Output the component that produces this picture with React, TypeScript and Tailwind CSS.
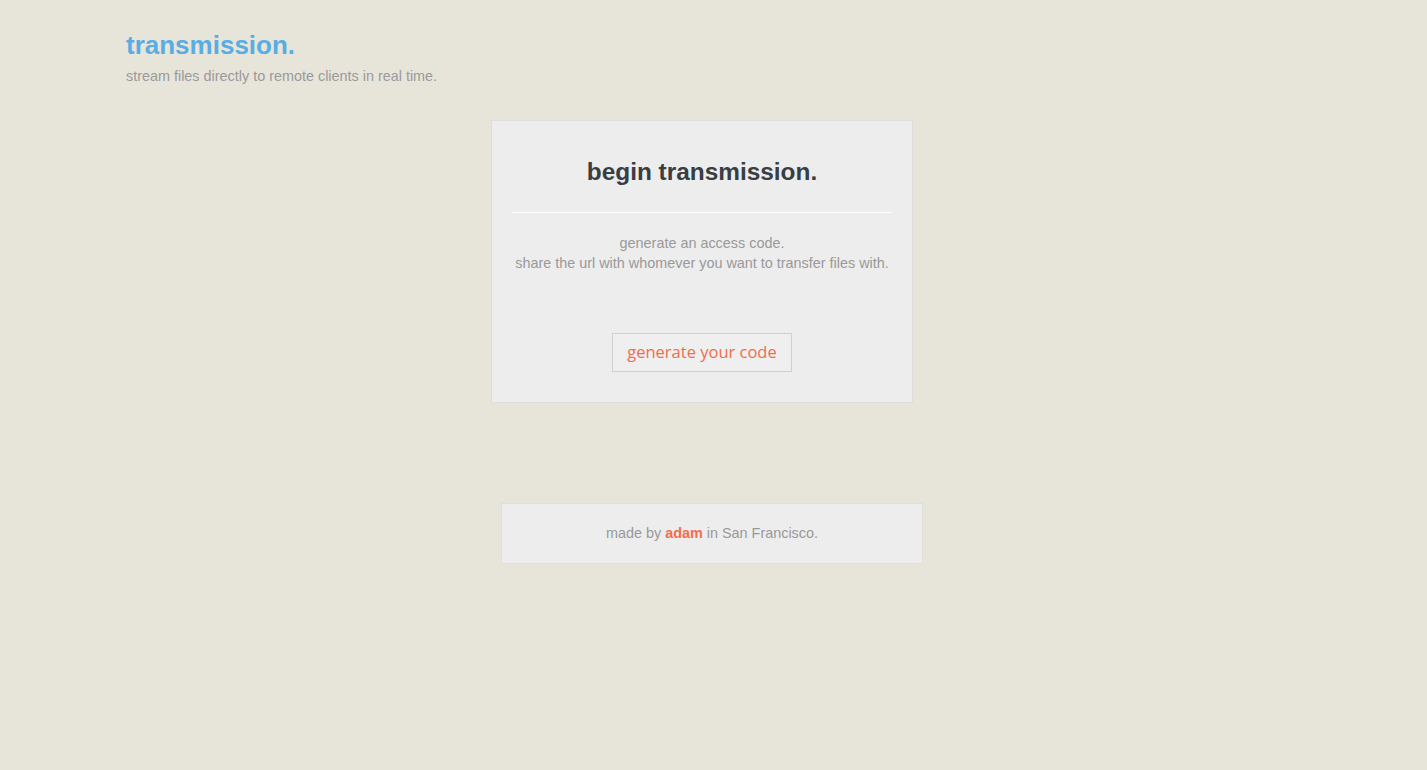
export default function App() {
  return (
    <div className="min-h-screen bg-[#e7e5da] font-['Liberation_Sans',Arial,sans-serif]">
      <header className="pl-[126px] pt-[29px]">
        <h1 className="text-[26px] font-bold leading-[32px] text-[#5aade3]">transmission.</h1>
        <p className="mt-[6px] text-[14.4px] leading-[18px] text-[#9a9a9a]">
          stream files directly to remote clients in real time.
        </p>
      </header>

      <section className="ml-[491px] mt-[35px] h-[283px] w-[422px] border border-[#dedede] bg-[#ededed] px-5 pt-[36px]">
        <h2 className="text-center text-[24.4px] font-bold leading-[30px] text-[#383e44]">
          begin transmission.
        </h2>
        <div className="mt-[25px] h-px bg-white" />
        <p className="mt-[20px] text-center text-[14.4px] leading-[20px] text-[#999]">
          generate an access code.
          <br />
          share the url with whomever you want to transfer files with.
        </p>
        <div className="mt-[60px] flex justify-center">
          <button className="h-[39px] w-[180px] border border-[#cfcfcf] bg-[#efefef] font-['Open_Sans',sans-serif] text-[16.5px] text-[#f06d4b]">
            generate your code
          </button>
        </div>
      </section>

      <footer className="ml-[501px] mt-[100px] flex h-[61px] w-[422px] items-center justify-center border border-[#dedede] bg-[#ededed] pt-px text-[14.4px] text-[#999]">
        <span>
          made by <a className="font-bold text-[#f26d4a]">adam</a> in San Francisco.
        </span>
      </footer>
    </div>
  );
}
